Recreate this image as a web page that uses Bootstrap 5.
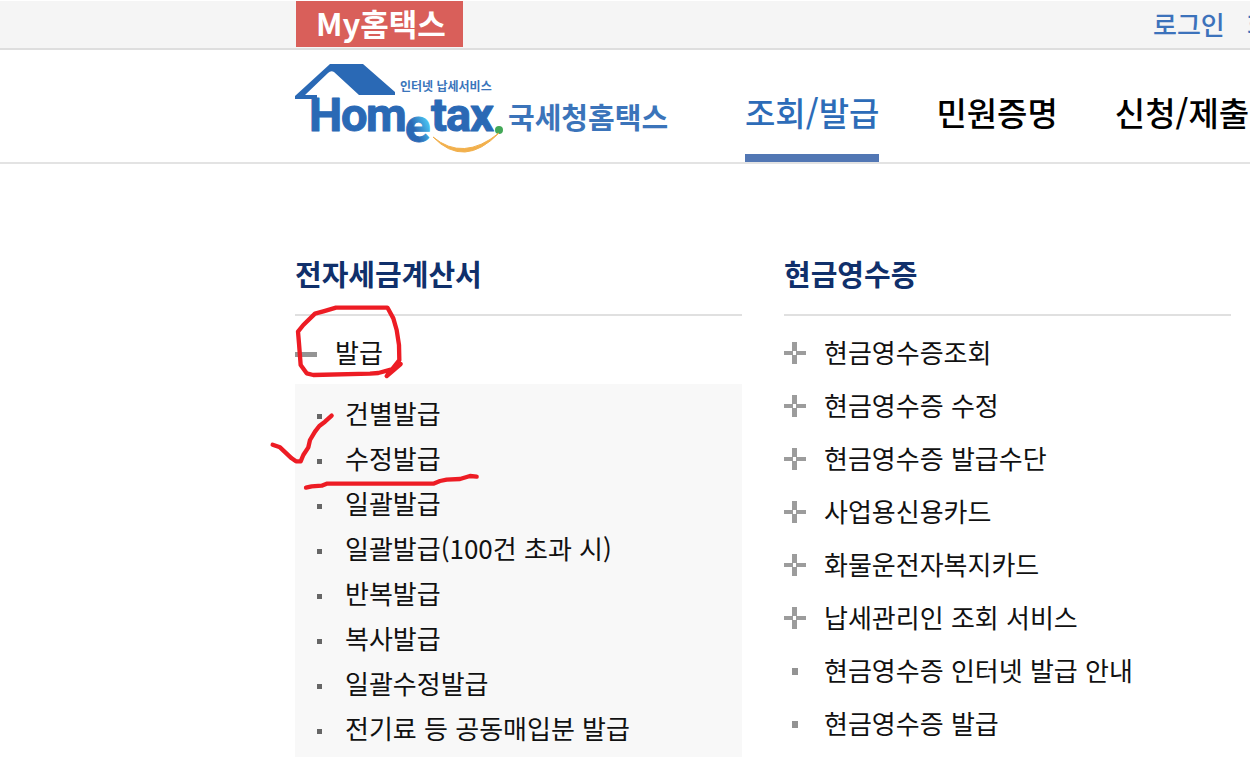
<!DOCTYPE html>
<html lang="ko">
<head>
<meta charset="utf-8">
<meta name="viewport" content="width=device-width, initial-scale=1">
<title>국세청홈택스</title>
<link href="https://cdn.jsdelivr.net/npm/bootstrap@5.3.0/dist/css/bootstrap.min.css" rel="stylesheet">
<style>
  body { font-family: "Noto Sans CJK KR", sans-serif; font-size: 26px; color: #111; background: #fff; overflow-x: hidden; }
  a { color: inherit; text-decoration: none; white-space: nowrap; }
  .page-inset { padding-left: 295px; }
  .util-bar { background: #f5f5f5; border-top: 1px solid #fff; border-bottom: 2px solid #dedede; height: 50px; overflow: hidden; }
  .my-tab { background: #d95f5a; color: #fff; font-size: 31px; font-weight: 700; line-height: 44px; height: 46px; padding: 0 20px; width: 167px; margin-left: 1px; }
  .util-links { gap: 22px; line-height: 46px; font-weight: 500; color: #3c72bb; width: 97px; }
  .site-header { height: 114px; border-bottom: 2px solid #e3e3e3; overflow: hidden; }
  .brand-logo { width: 378px; height: 112px; }
  .main-menu { gap: 57px; margin-left: 72px; font-size: 33px; font-weight: 500; color: #000; }
  .main-menu a { line-height: 124px; height: 112px; border-bottom: 8px solid transparent; }
  .main-menu a.active { color: #2d6cb8; border-color: #5277b4; }
  .sitemap { display: grid; grid-template-columns: 1fr 1fr; gap: 42px; padding: 89px 19px 0 295px; }
  .group-title { font-size: 29px; font-weight: 700; line-height: 40px; color: #10306b; padding-bottom: 21px; margin-bottom: 10px; border-bottom: 2px solid #e0e0e0; }
  .entry { display: flex; align-items: center; height: 53px; line-height: 50px; }
  .entry span { padding-bottom: 2px; }
  .entry svg { width: 22px; height: 22px; margin-right: 18px; flex: none; }
  .submenu { background: #f8f8f8; margin-top: 5px; padding: 8px 22px 5px; }
  .submenu li { display: flex; align-items: center; height: 45px; line-height: 40px; }
  .submenu a { padding-bottom: 4px; }
  .submenu li::before { content: ""; width: 5px; height: 5px; background: #666; margin: 4px 23px 0 0; }
  .pen-marks { position: absolute; left: -35px; top: -13px; width: 300px; height: 260px; pointer-events: none; }
</style>
</head>
<body>
<svg class="d-none" xmlns="http://www.w3.org/2000/svg">
  <symbol id="plus" viewBox="0 0 22 22"><path d="M8 0h5v9h9v4h-9v9H8v-9H0V9h8z" fill="#9c9c9c"/><path d="M9 9h3v4H9z" fill="#fff"/></symbol>
  <symbol id="minus" viewBox="0 0 22 22"><path d="M0 10h22v5H0z" fill="#949494"/></symbol>
  <symbol id="dot" viewBox="0 0 22 22"><path d="M8 8h6v7H8z" fill="#939393"/></symbol>
</svg>

<div class="util-bar page-inset d-flex justify-content-between">
  <a href="#" class="my-tab">My홈택스</a>
  <nav class="util-links d-flex"><a href="#">로그인</a><a href="#">회원가입</a></nav>
</div>

<header class="site-header page-inset d-flex">
  <a href="#" class="d-block flex-shrink-0" aria-label="Hometax 국세청홈택스">
    <svg class="brand-logo d-block" viewBox="0 1 378 112">
      <defs>
        <linearGradient id="eTone" x1="1" y1="0" x2="0" y2="1"><stop offset=".3" stop-color="#46b8ea"/><stop offset=".6" stop-color="#2a69b5"/></linearGradient>
      </defs>
      <path d="M35 15H68L100 43V46H64L39 23Q36 21 33 24L10 46H22V50H0V47Z" fill="#2a69b5"/>
      <g font-family="Roboto,sans-serif" font-weight="700" font-size="47" fill="#2a69b5" stroke="#2a69b5" stroke-width="1" stroke-linejoin="round">
        <text x="14" y="82">H</text><text x="46" y="82">o</text><text x="71" y="82">m</text>
        <text x="110" y="93" fill="url(#eTone)" stroke="url(#eTone)">e</text>
        <text x="136" y="82">t</text><text x="151" y="82">a</text><text x="175" y="82">x</text>
      </g>
      <circle cx="204" cy="81" r="4" fill="#43a857"/>
      <path d="M138 88Q168 113 204 84Q169 120 138 88Z" fill="#f2b04c" stroke="#f2b04c" stroke-linejoin="round"/>
      <text x="105" y="42" font-size="12" font-weight="700" fill="#3a75bb">인터넷 납세서비스</text>
      <text x="213" y="80" font-size="29" font-weight="700" fill="#3b74ba">국세청홈택스</text>
    </svg>
  </a>
  <nav class="main-menu d-flex">
    <a href="#" class="active" aria-current="page">조회/발급</a>
    <a href="#">민원증명</a>
    <a href="#">신청/제출</a>
  </nav>
</header>

<main class="sitemap">
  <section class="position-relative">
    <h2 class="group-title">전자세금계산서</h2>
    <a href="#" class="entry"><svg><use href="#minus"/></svg><span>발급</span></a>
    <ul class="submenu list-unstyled mb-0">
      <li><a href="#">건별발급</a></li>
      <li><a href="#">수정발급</a></li>
      <li><a href="#">일괄발급</a></li>
      <li><a href="#">일괄발급(100건 초과 시)</a></li>
      <li><a href="#">반복발급</a></li>
      <li><a href="#">복사발급</a></li>
      <li><a href="#">일괄수정발급</a></li>
      <li><a href="#">전기료 등 공동매입분 발급</a></li>
    </ul>
    <svg class="pen-marks" viewBox="0 0 900 780" fill="none" stroke="#ed1c24" stroke-width="13" stroke-linecap="round" stroke-linejoin="round" aria-hidden="true">
      <path d="M383 204L400 235L410 270L417 315L418 360L380 408L422 372L395 388L355 399L330 401L160 405L140 400L122 375L117 310L114 275L130 255L165 221L190 214L228 203H380"/>
      <path d="M38 614L60 622L95 655L108 664H122L130 645L145 622L150 600L165 575L178 558L195 545L215 527"/>
      <path d="M138 743L155 739L185 737L200 731H520L540 723L560 719L600 717L630 708L650 710"/>
    </svg>
  </section>
  <section>
    <h2 class="group-title">현금영수증</h2>
    <ul class="list-unstyled mb-0">
      <li><a href="#" class="entry"><svg><use href="#plus"/></svg><span>현금영수증조회</span></a></li>
      <li><a href="#" class="entry"><svg><use href="#plus"/></svg><span>현금영수증 수정</span></a></li>
      <li><a href="#" class="entry"><svg><use href="#plus"/></svg><span>현금영수증 발급수단</span></a></li>
      <li><a href="#" class="entry"><svg><use href="#plus"/></svg><span>사업용신용카드</span></a></li>
      <li><a href="#" class="entry"><svg><use href="#plus"/></svg><span>화물운전자복지카드</span></a></li>
      <li><a href="#" class="entry"><svg><use href="#plus"/></svg><span>납세관리인 조회 서비스</span></a></li>
      <li><a href="#" class="entry"><svg><use href="#dot"/></svg><span>현금영수증 인터넷 발급 안내</span></a></li>
      <li><a href="#" class="entry"><svg><use href="#dot"/></svg><span>현금영수증 발급</span></a></li>
    </ul>
  </section>
</main>
<script src="https://cdn.jsdelivr.net/npm/bootstrap@5.3.0/dist/js/bootstrap.bundle.min.js"></script>
</body>
</html>
